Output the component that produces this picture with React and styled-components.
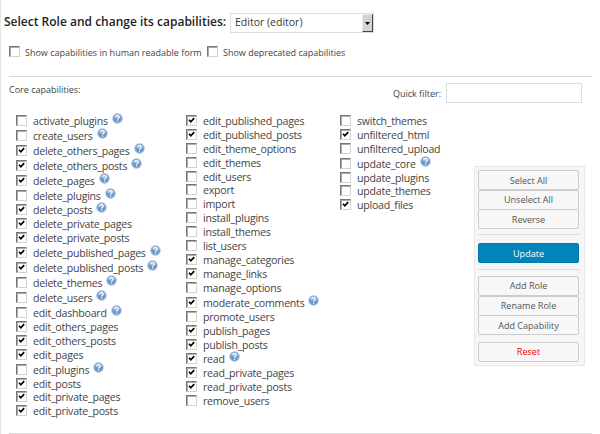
import React from "react";
import styled, { createGlobalStyle } from "styled-components";

const GlobalStyle = createGlobalStyle`
  * { box-sizing: border-box; }
  body { margin: 0; background: #fff; font-family: "Open Sans", sans-serif; color: #444; overflow: hidden; }
`;

const Page = styled.main`
  width: 600px;
  height: 434px;
  display: flex;
  flex-direction: column;
  border-left: 1px solid #e6e6e6;
  overflow: hidden;
  white-space: nowrap;
`;

const RoleBar = styled.header`
  display: flex;
  align-items: center;
  height: 20px;
  margin: 13px 0 0 3px;
`;

const Title = styled.h1`
  margin: -2px 0 0;
  width: 226px;
  font-size: 12px;
  line-height: 20px;
  font-weight: 600;
  color: #222;
`;

const Select = styled.div`
  display: flex;
  justify-content: space-between;
  width: 144px;
  height: 20px;
  padding-left: 4px;
  border: 1px solid #ddd;
  font-size: 10.5px;
  line-height: 17px;
  color: #32373c;
`;

const SelectArrow = styled.span`
  display: flex;
  align-items: center;
  justify-content: center;
  width: 11px;
  height: 18px;
  background: #d6d3ce;
  border: 1px solid #eee;
  border-right-color: #444;
  border-bottom-color: #444;
`;

const Options = styled.div`
  display: flex;
  height: 13px;
  margin: 13px 0 0 8px;
`;

const Option = styled.label`
  display: flex;
  width: ${(p) => p.$width}px;
  gap: 5px;
  font-size: 9px;
  line-height: 13px;
`;

const Box = styled.span`
  display: flex;
  flex: none;
  width: 11px;
  height: 11px;
  background: #fff;
  border: 1px solid #d5d2cc;
  border-top-color: #777;
  border-left-color: #777;
  box-shadow: inset 1px 1px 0 #aaa;
`;

const Divider = styled.hr`
  flex: none;
  width: 583px;
  height: 1px;
  margin: ${(p) => p.$top}px 0 0 8px;
  border: 0;
  background: #d9d9d9;
`;

const FilterBar = styled.div`
  display: flex;
  justify-content: space-between;
  width: 573px;
  height: 20px;
  margin: 6px 0 0 8px;
  font-size: 9px;
  line-height: 13px;
`;

const Filter = styled.label`
  display: flex;
  align-items: center;
  gap: 5px;
`;

const FilterInput = styled.input`
  width: 136px;
  height: 20px;
  border: 1px solid #ddd;
  outline: 0;
  padding: 0 4px;
  background: #fff;
`;

const Body = styled.section`
  display: flex;
  height: 307px;
  padding: 8px 0 0 15px;
`;

const Column = styled.div`
  display: flex;
  flex-direction: column;
  width: ${(p) => p.$width}px;
  padding-top: ${(p) => p.$top}px;
`;

const Capability = styled.label`
  display: flex;
  flex: none;
  align-items: flex-end;
  height: ${(p) => (p.$help ? 14.93 : 13.93)}px;
  font-size: 10.6px;
  letter-spacing: -0.24px;
  line-height: 13px;
`;

const CapabilityName = styled.span`
  height: 11px;
  margin: 0 4px 0 6px;
`;

const HelpIcon = styled.svg`
  flex: none;
  width: 11px;
  height: 11px;
  margin-bottom: 2px;
`;

const Actions = styled.aside`
  width: 111px;
  height: 200px;
  margin-top: 55px;
  padding: 3px 4px 0 3px;
  background: #f6f6f6;
  border: 1px solid #e8e8e8;
`;

const Button = styled.button`
  display: block;
  width: 101px;
  height: 20px;
  margin: 0 0 -0.3px;
  padding: 0;
  font: 9.05px/17px "Open Sans", sans-serif;
  color: ${(p) => (p.$primary ? "#fff" : p.$danger ? "#f00" : "#555")};
  background: ${(p) => (p.$primary ? "#0085ba" : "#f7f7f7")};
  border: 1px solid ${(p) => (p.$primary ? "#0079ad" : "#ccc")};
  border-radius: 2px;
`;

const Separator = styled.hr`
  height: 1px;
  margin: ${(p) => p.$top}px 0 ${(p) => p.$bottom}px;
  border: 0;
  background: #ddd;
`;

const ResetArea = styled.div`
  margin-top: 7px;
`;

// Each entry is [name, flags]: "x" is granted, "?" has a help link.
const columns = [
  { width: 170, top: 0, items: [
    ["activate_plugins", "?"], ["create_users", "?"], ["delete_others_pages", "x?"],
    ["delete_others_posts", "x?"], ["delete_pages", "x?"], ["delete_plugins", "?"],
    ["delete_posts", "x?"], ["delete_private_pages", "x"], ["delete_private_posts", "x"],
    ["delete_published_pages", "x?"], ["delete_published_posts", "x?"], ["delete_themes", "?"],
    ["delete_users", "?"], ["edit_dashboard", "?"], ["edit_others_pages", "x"],
    ["edit_others_posts", "x"], ["edit_pages", "x"], ["edit_plugins", "?"],
    ["edit_posts", "x"], ["edit_private_pages", "x"], ["edit_private_posts", "x"],
  ] },
  { width: 154, top: 0.9, items: [
    ["edit_published_pages", "x"], ["edit_published_posts", "x"], ["edit_theme_options", ""],
    ["edit_themes", ""], ["edit_users", ""], ["export", ""], ["import", ""],
    ["install_plugins", ""], ["install_themes", ""], ["list_users", ""],
    ["manage_categories", "x"], ["manage_links", "x"], ["manage_options", ""],
    ["moderate_comments", "x?"], ["promote_users", ""], ["publish_pages", "x"],
    ["publish_posts", "x"], ["read", "x?"], ["read_private_pages", "x"],
    ["read_private_posts", "x"], ["remove_users", ""],
  ] },
  { width: 134, top: 0.9, items: [
    ["switch_themes", ""], ["unfiltered_html", "x"], ["unfiltered_upload", ""],
    ["update_core", "?"], ["update_plugins", ""], ["update_themes", ""], ["upload_files", "x"],
  ] },
];

function Checkbox({ checked }) {
  return (
    <Box>
      {checked && (
        <svg width="9" height="9" viewBox="0 0 9 9">
          <path d="M2 3.8 L3.8 5.8 L7.2 2.2" fill="none" stroke="#000" strokeWidth="1.7" />
        </svg>
      )}
    </Box>
  );
}

function Help() {
  return (
    <HelpIcon viewBox="0 0 11 11">
      <circle cx="5.5" cy="5.5" r="4.8" fill="#6c98cd" stroke="#b3c8e2" />
      <ellipse cx="5.5" cy="3.2" rx="3.5" ry="2.2" fill="#94b6de" />
      <path d="M3.8 4.2 C3.8 2 7.3 2.1 7.2 4.1 C7.1 5.3 5.6 5.2 5.6 6.7 M5.6 7.6 V8.8" fill="none" stroke="#fff" strokeWidth="1.1" />
    </HelpIcon>
  );
}

export default function App() {
  return (
    <>
      <GlobalStyle />
      <Page>
        <RoleBar>
          <Title>Select Role and change its capabilities:</Title>
          <Select>
            Editor (editor)
            <SelectArrow>
              <svg width="5" height="3" viewBox="0 0 5 3"><path d="M0 0H5L2.5 3Z" fill="#000" /></svg>
            </SelectArrow>
          </Select>
        </RoleBar>
        <Options>
          <Option $width={198}><Checkbox />Show capabilities in human readable form</Option>
          <Option $width={150}><Checkbox />Show deprecated capabilities</Option>
        </Options>
        <Divider $top={17} />
        <FilterBar>
          <span>Core capabilities:</span>
          <Filter>Quick filter:<FilterInput /></Filter>
        </FilterBar>
        <Body>
          {columns.map((column) => (
            <Column key={column.width} $width={column.width} $top={column.top}>
              {column.items.map(([name, flags]) => (
                <Capability key={name} $help={flags.includes("?")}>
                  <Checkbox checked={flags.includes("x")} />
                  <CapabilityName>{name}</CapabilityName>
                  {flags.includes("?") && <Help />}
                </Capability>
              ))}
            </Column>
          ))}
          <Actions>
            <Button>Select All</Button>
            <Button>Unselect All</Button>
            <Button>Reverse</Button>
            <Separator $top={5} $bottom={8} />
            <Button $primary>Update</Button>
            <Separator $top={6} $bottom={6} />
            <Button>Add Role</Button>
            <Button>Rename Role</Button>
            <Button>Add Capability</Button>
            <ResetArea>
              <Button $danger>Reset</Button>
            </ResetArea>
          </Actions>
        </Body>
        <Divider $top={23} />
      </Page>
    </>
  );
}
